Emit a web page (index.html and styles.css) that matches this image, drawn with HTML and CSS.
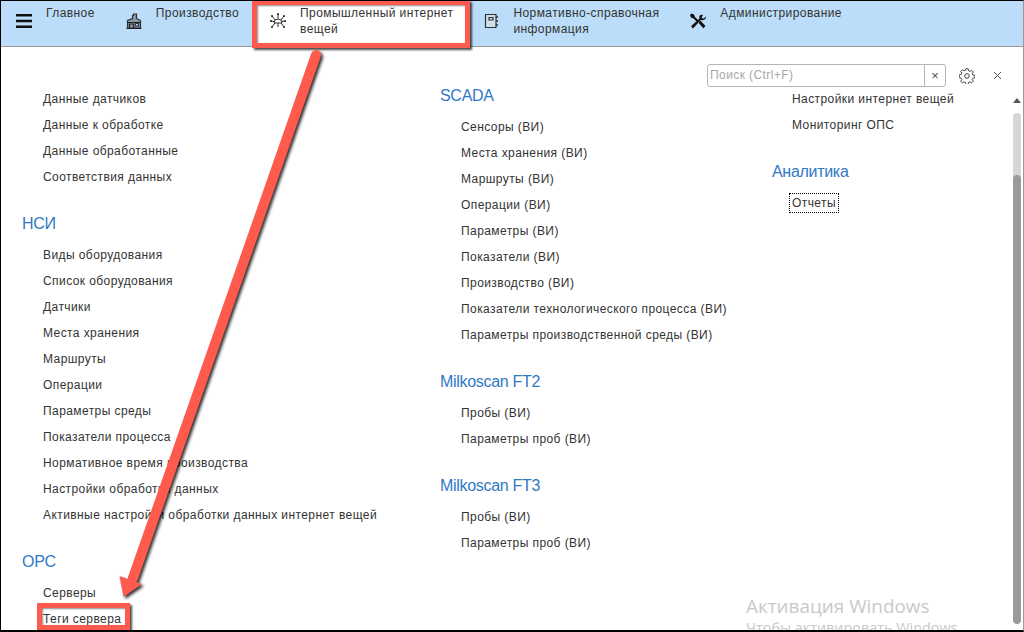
FILE: index.html
```html
<!DOCTYPE html>
<html lang="ru">
<head>
<meta charset="utf-8">
<title>Промышленный интернет вещей</title>
<link rel="stylesheet" href="styles.css">
</head>
<body>
<div class="frame">
  <header class="tabs">
    <div class="tab">
      <svg class="icon" viewBox="0 0 16 16"><path d="M0 1h16v2.500H0zM0 6.700h16v2.500H0zM0 12.400h16v2.500H0z" fill="#111"/></svg>
      <span>Главное</span>
    </div>
    <div class="tab">
      <svg class="icon" viewBox="0 0 16 16" fill="none" stroke="#333" stroke-width="1.200"><path d="M1.500 15V7.500l5-2V2.500h1V1h3v4.500l4 2V15z" fill="#8a98a6"/><path d="M1 9.500h14M3.500 15v-4h4v4M0.500 15.500h15" stroke="#222"/><path d="M9.500 10.500h3v2.500h-3z" fill="#bbddf9"/></svg>
      <span>Производство</span>
    </div>
    <div class="tab active">
      <svg class="icon" viewBox="0 0 16 16" fill="none" stroke="#333" stroke-width="1"><path d="M4 10a4 4 0 0 1 8 0z" fill="#fff"/><path d="M8 6V1M5 7L2 3M11 7l3-4M4 8.500L.8 8M12 8.500l3.200-.5M5 10l-3 4M11 10l3 4M8 10v4"/><g fill="#222" stroke="none"><circle cx="8" cy="1" r="1"/><circle cx="2" cy="3" r="1"/><circle cx="14" cy="3" r="1"/><circle cx="1" cy="8" r="1"/><circle cx="15" cy="8" r="1"/><circle cx="2" cy="14" r="1"/><circle cx="14" cy="14" r="1"/></g></svg>
      <span>Промышленный интернет<br>вещей</span>
    </div>
    <div class="tab">
      <svg class="icon" viewBox="0 0 16 16" fill="none" stroke="#333" stroke-width="1.200"><path d="M2.500 1.500h10.500v13H2.500z" fill="#ccdfee"/><path d="M6 4.500h4v2.500H6z"/><path d="M14 3v2M14 7v2M14 11v2" stroke-width="1.500"/></svg>
      <span>Нормативно-справочная<br>информация</span>
    </div>
    <div class="tab">
      <svg class="icon" viewBox="0 0 16 16" fill="#111"><path d="M1.500 0.500L4 1.500 5 4 9 8 7.500 9.500 3.500 5.500 1 4.500 0 2z"/><path d="M16 3.500L13.500 5.800 11.500 4.500 13 2C10.500 0.800 8.500 3 9.500 5.500L1 13.200 3 15.500 10.800 7C13.500 8 16.500 6 16 3.500z"/><path d="M8.500 9.800l2-2 5 5.200-2.200 2.200z"/></svg>
      <span>Администрирование</span>
    </div>
  </header>

  <main class="panel">
    <section class="col col-first">
      <ul class="list">
        <li>Данные датчиков</li>
        <li>Данные к обработке</li>
        <li>Данные обработанные</li>
        <li>Соответствия данных</li>
      </ul>
      <h2>НСИ</h2>
      <ul class="list">
        <li>Виды оборудования</li>
        <li>Список оборудования</li>
        <li>Датчики</li>
        <li>Места хранения</li>
        <li>Маршруты</li>
        <li>Операции</li>
        <li>Параметры среды</li>
        <li>Показатели процесса</li>
        <li>Нормативное время производства</li>
        <li>Настройки обработки данных</li>
        <li>Активные настройки обработки данных интернет вещей</li>
      </ul>
      <h2>OPC</h2>
      <ul class="list">
        <li>Серверы</li>
        <li>Теги сервера</li>
      </ul>
    </section>
    <section class="col col-mid">
      <h2>SCADA</h2>
      <ul class="list">
        <li>Сенсоры (ВИ)</li>
        <li>Места хранения (ВИ)</li>
        <li>Маршруты (ВИ)</li>
        <li>Операции (ВИ)</li>
        <li>Параметры (ВИ)</li>
        <li>Показатели (ВИ)</li>
        <li>Производство (ВИ)</li>
        <li>Показатели технологического процесса (ВИ)</li>
        <li>Параметры производственной среды (ВИ)</li>
      </ul>
      <h2>Milkoscan FT2</h2>
      <ul class="list">
        <li>Пробы (ВИ)</li>
        <li>Параметры проб (ВИ)</li>
      </ul>
      <h2>Milkoscan FT3</h2>
      <ul class="list">
        <li>Пробы (ВИ)</li>
        <li>Параметры проб (ВИ)</li>
      </ul>
    </section>
    <section class="col col-first">
      <ul class="list">
        <li>Настройки интернет вещей</li>
        <li>Мониторинг ОПС</li>
      </ul>
      <h2>Аналитика</h2>
      <ul class="list">
        <li><span class="focused">Отчеты</span></li>
      </ul>
    </section>
  </main>

  <div class="toolbar">
    <div class="search">
      <span class="search-text">Поиск (Ctrl+F)</span>
      <span class="search-clear">×</span>
    </div>
    <svg class="gear" viewBox="0 0 16 16" fill="none" stroke="#444" stroke-width="1"><circle cx="8" cy="8" r="2.300"/><path d="M6.800.8h2.400l.4 2 1.300.6 1.700-1.100 1.700 1.700-1.100 1.700.6 1.300 2 .4v2.400l-2 .4-.6 1.300 1.100 1.700-1.700 1.700-1.700-1.100-1.300.6-.4 2H6.800l-.4-2-1.300-.6-1.700 1.100-1.700-1.700 1.100-1.700-.6-1.300-2-.4V6.800l2-.4.6-1.300L1.700 3.400l1.700-1.700 1.700 1.100 1.300-.6z"/></svg>
    <svg class="close" viewBox="0 0 9 9" stroke="#555" stroke-width="1"><path d="M1 1l7 7M8 1L1 8"/></svg>
  </div>

  <div class="scroll-arrow"></div>
  <div class="scroll-track"><div class="scroll-thumb"></div></div>

  <div class="watermark">
    <div class="wm-title">Активация Windows</div>
    <div class="wm-sub">Чтобы активировать Windows</div>
  </div>

  <div class="mark mark-tab"></div>
  <div class="mark mark-item"></div>
  <svg class="arrow" viewBox="0 0 1024 632">
    <path d="M316 55L133 578" stroke="#ff5a4e" stroke-width="10" stroke-linecap="round"/>
    <path d="M119.500 576L142 584 123.500 597z" fill="#ff5a4e"/>
  </svg>
</div>
</body>
</html>
```
FILE: styles.css
```css
* { box-sizing: border-box; }
html, body { margin: 0; padding: 0; background: #fff; }
body { font-family: "Liberation Sans", Arial, sans-serif; font-size: 12px; color: #333; }

.frame {
  position: relative;
  width: 1024px;
  height: 632px;
  overflow: hidden;
  border-top: 1px solid #000;
  border-left: 1px solid #000;
  border-right: 1px solid #999;
  border-bottom: 2px solid #000;
  display: flex;
  flex-direction: column;
}

.tabs {
  display: flex;
  height: 46px;
  flex: none;
  background: #bbddf9;
  border-bottom: 1px solid #999;
}
.tab {
  display: flex;
  align-items: flex-start;
  padding: 4px 17px 0 14px;
  line-height: 16px;
  white-space: nowrap;
  letter-spacing: 0.42px;
}
.tab .icon { width: 16px; height: 16px; margin: 8px 14px 0 0; flex: none; }
.tab:first-child .icon { margin: 8px 14px 0 1px; }
.tab.active { background: #fff; padding-right: 16px; }

.panel {
  flex: 1;
  display: grid;
  grid-template-columns: 418px 332px 1fr;
  padding-left: 21px;
  min-height: 0;
}
.col-first { padding-top: 39px; }
.col-mid { padding-top: 36px; }
.col h2 {
  margin: 21px 0 5px;
  font-size: 16px;
  font-weight: 400;
  line-height: 26px;
  letter-spacing: -0.3px;
  color: #3079c4;
}
.col h2:first-child { margin-top: 0; }
.list { list-style: none; margin: 0; padding: 0 0 0 21px; }
.col:last-child .list { padding-left: 20px; }
.list li { height: 26px; line-height: 26px; letter-spacing: 0.42px; white-space: nowrap; }
.focused { outline: 1px dotted #000; outline-offset: 1px; padding: 1px 1px; margin-left: -1px; }

.toolbar {
  position: absolute;
  left: 706px;
  top: 63px;
  display: flex;
  align-items: center;
}
.search {
  width: 239px;
  height: 23px;
  display: flex;
  background: #fff;
  border: 1px solid #b5b5b5;
  border-radius: 3px;
  line-height: 21px;
}
.search-text { flex: 1; padding-left: 2px; color: #a8a8a8; letter-spacing: 0.42px; border-right: 1px solid #b5b5b5; }
.search-clear { width: 20px; text-align: center; color: #555; font-size: 13px; }
.gear { width: 16px; height: 16px; margin-left: 13px; }
.close { width: 9px; height: 9px; margin-left: 18px; }

.scroll-arrow {
  position: absolute;
  left: 1012px;
  top: 97px;
  border-left: 4px solid transparent;
  border-right: 4px solid transparent;
  border-bottom: 5px solid #555;
}
.scroll-track {
  position: absolute;
  left: 1012px;
  top: 112px;
  width: 8px;
  height: 511px;
  background: #d6d6d6;
  border-radius: 4px;
  overflow: hidden;
}
.scroll-thumb {
  margin-top: 62px;
  height: 449px;
  background: #9b9b9b;
  border-radius: 4px;
}

.watermark {
  position: absolute;
  left: 745px;
  top: 593px;
  font-family: "Open Sans", sans-serif;
  color: #c9c9c9;
}
.wm-title { font-size: 18.900px; line-height: 24px; }
.wm-sub { font-size: 14.400px; line-height: 20px; white-space: nowrap; }

.mark {
  position: absolute;
  border: 5px solid #ff5a4e;
  box-shadow: 2px 2px 2px rgba(0,0,0,.7), inset 1px 1px 2px rgba(0,0,0,.45);
}
.mark-tab { left: 251px; top: -1px; width: 218px; height: 48px; }
.mark-item { left: 36px; top: 602px; width: 93px; height: 27px; }

.arrow {
  position: absolute;
  left: -1px;
  top: -1px;
  width: 1024px;
  height: 632px;
  filter: drop-shadow(2px 2px 1.500px rgba(0,0,0,.8));
}
```
